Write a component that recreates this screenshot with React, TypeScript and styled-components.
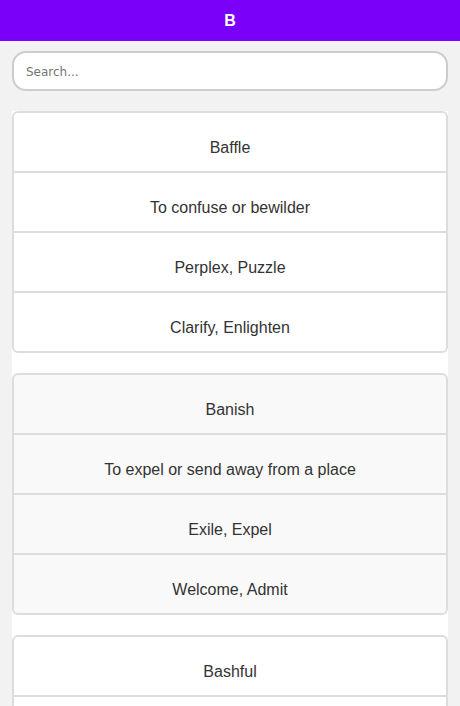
import React, { useState } from 'react';
import styled, { createGlobalStyle } from 'styled-components';

const GlobalStyle = createGlobalStyle`
  body {
    margin: 0;
    background: #f2f2f2;
    font-family: "Liberation Sans", Arial, sans-serif;
  }
`;

const Header = styled.header`
  height: 41px;
  background: #7a00f9;
  color: #ffffff;
  display: flex;
  align-items: center;
  justify-content: center;
  font-size: 16px;
  font-weight: 700;
`;

const Main = styled.main`
  padding: 10px 12px;
`;

const SearchInput = styled.input`
  box-sizing: border-box;
  width: 100%;
  height: 40px;
  border: 2px solid #cccccc;
  border-radius: 14px;
  padding: 2px 12px 0;
  font-family: "DejaVu Sans", sans-serif;
  font-size: 12px;
  color: #333;
  background: #ffffff;
  outline: none;

  &::placeholder {
    color: #757575;
  }
`;

const List = styled.div`
  margin-top: 20px;
  background: #ffffff;
  display: flex;
  flex-direction: column;
  gap: 20px;
`;

const Card = styled.div<{ $alt: boolean }>`
  border: 2px solid #dddddd;
  border-radius: 6px;
  background: ${(p) => (p.$alt ? '#f9f9f9' : '#ffffff')};
  overflow: hidden;
`;

const Row = styled.div`
  padding: 26px 10px 14px;
  line-height: 18px;
  font-size: 16px;
  color: #333333;
  text-align: center;
  border-bottom: 2px solid #dddddd;

  &:last-child {
    border-bottom: none;
  }
`;

const words = [
  {
    word: 'Baffle',
    meaning: 'To confuse or bewilder',
    synonyms: 'Perplex, Puzzle',
    antonyms: 'Clarify, Enlighten',
  },
  {
    word: 'Banish',
    meaning: 'To expel or send away from a place',
    synonyms: 'Exile, Expel',
    antonyms: 'Welcome, Admit',
  },
  {
    word: 'Bashful',
    meaning: 'Shy and easily embarrassed',
    synonyms: 'Timid, Coy',
    antonyms: 'Bold, Confident',
  },
  {
    word: 'Benevolent',
    meaning: 'Well meaning and kindly',
    synonyms: 'Kind, Generous',
    antonyms: 'Malevolent, Cruel',
  },
];

const App: React.FC = () => {
  const [query, setQuery] = useState('');
  const shown = words.filter((w) =>
    w.word.toLowerCase().includes(query.toLowerCase())
  );

  return (
    <>
      <GlobalStyle />
      <Header>B</Header>
      <Main>
        <SearchInput
          placeholder="Search..."
          value={query}
          onChange={(e) => setQuery(e.target.value)}
        />
        <List>
          {shown.map((w, i) => (
            <Card key={w.word} $alt={i % 2 === 1}>
              <Row>{w.word}</Row>
              <Row>{w.meaning}</Row>
              <Row>{w.synonyms}</Row>
              <Row>{w.antonyms}</Row>
            </Card>
          ))}
        </List>
      </Main>
    </>
  );
};

export default App;
